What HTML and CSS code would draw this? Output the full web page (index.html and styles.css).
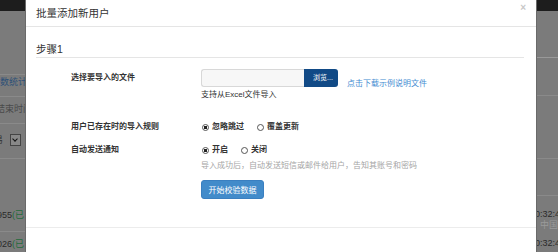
FILE: index.html
```html
<!DOCTYPE html>
<html>
<head>
  <meta charset="UTF-8">
  <title>批量添加新用户</title>
  <link rel="stylesheet" href="styles.css">
</head>
<body>

  <div class="backdrop left">
    <div class="topbar"></div>
    <div class="bg-line l1"></div>
    <div class="bg-text blue right-al">数统计</div>
    <div class="bg-line l2"></div>
    <div class="bg-text grey shift">结束时间</div>
    <div class="bg-line l3"></div>
    <div class="bg-select"><span class="cut">易</span><span class="sel-box"></span></div>
    <div class="bg-line l4"></div>
    <div class="bg-text dark num1">955<span class="green">(已</span></div>
    <div class="bg-line l5"></div>
    <div class="bg-text dark num2">026<span class="green">(已</span></div>
  </div>

  <div class="modal">
    <div class="modal-header">
      <span class="modal-title">批量添加新用户</span>
      <span class="close">×</span>
    </div>

    <div class="modal-body">
      <div class="legend">步骤1</div>

      <div class="form-row first">
        <div class="label">选择要导入的文件</div>
        <div class="controls">
          <div class="file-line">
            <div class="input-group">
              <span class="file-input"></span>
              <span class="browse">浏览...</span>
            </div>
            <a class="link">点击下载示例说明文件</a>
          </div>
          <div class="help">支持从Excel文件导入</div>
        </div>
      </div>

      <div class="form-row second">
        <div class="label">用户已存在时的导入规则</div>
        <div class="controls">
          <div class="radios">
            <span class="radio checked">忽略跳过</span>
            <span class="radio">覆盖更新</span>
          </div>
        </div>
      </div>

      <div class="form-row third">
        <div class="label">自动发送通知</div>
        <div class="controls">
          <div class="radios">
            <span class="radio checked">开启</span>
            <span class="radio">关闭</span>
          </div>
          <div class="help muted">导入成功后，自动发送短信或邮件给用户，告知其账号和密码</div>
          <button class="btn-primary">开始校验数据</button>
        </div>
      </div>
    </div>

    <div class="modal-footer"></div>
  </div>

  <div class="backdrop right">
    <div class="topbar"></div>
    <div class="bg-line r1"></div>
    <div class="bg-line r2"></div>
    <div class="bg-line r3"></div>
    <div class="bg-line r4"></div>
    <div class="bg-text dark time1">0:32:45</div>
    <div class="bg-text light">中国</div>
    <div class="bg-text dark time2">0:32:45</div>
  </div>

</body>
</html>
```

FILE: styles.css
```css
body {
  margin: 0;
  height: 252px;
  overflow: hidden;
  display: flex;
  background-color: #7b7b7b;
  font-family: "Liberation Sans", "Noto Sans CJK SC", sans-serif;
  color: #333;
}

/* dimmed page behind the dialog */
.backdrop {
  overflow: hidden;
  background-color: #7b7b7b;
  white-space: nowrap;
  font-size: 9px;
}

.backdrop.left {
  width: 25px;
  border-right: 1px solid #6a6a6a;
}

.backdrop.right {
  width: 21px;
  border-left: 1px solid #6a6a6a;
}

.topbar {
  height: 11px;
  background-color: #1d1d1d;
}

.bg-line {
  height: 1px;
  background-color: #8a8a8a;
}

.bg-text {
  line-height: 12px;
}

.blue { color: #2d5078; }
.grey { color: #4a4a4a; }
.dark { color: #2a2a2a; }
.light { color: #9a9a9a; }
.green { color: #1f6b3c; }

.right-al {
  text-align: right;
  padding-right: 4px;
}

.shift {
  margin-left: -4px;
}

.l1 { margin-top: 63px; margin-bottom: 1px; }
.l2 { margin-top: 8px; margin-bottom: 6px; }
.l3 { margin-top: 8px; margin-bottom: 9px; }

.bg-select {
  display: flex;
  align-items: center;
  gap: 7px;
  height: 13px;
  color: #333;
  margin-left: -6px;
}

.sel-box {
  width: 9px;
  height: 10px;
  border: 1px solid #444;
  background-color: #888;
  position: relative;
}

.sel-box::after {
  content: "";
  position: absolute;
  left: 2px;
  top: 2px;
  width: 3px;
  height: 3px;
  border-right: 1.5px solid #111;
  border-bottom: 1.5px solid #111;
  transform: rotate(45deg);
}

.l4 { margin-top: 12px; margin-bottom: 0; }

.num1 { margin-top: 50px; margin-left: -3px; }
.l5 { margin-top: 10px; margin-bottom: 6px; }
.num2 { margin-left: -3px; }

.r1 { margin-top: 46px; background-color: #999; }
.r2 { margin-top: 37px; }
.r3 { margin-top: 62px; }
.r4 { margin-top: 36px; }

.time1 { margin-top: 12px; margin-left: -2px; }
.light { margin-left: 3px; line-height: 11px; }
.time2 { margin-top: 6px; margin-left: -2px; }

/* dialog */
.modal {
  width: 510px;
  background-color: #fff;
  flex-shrink: 0;
}

.modal-header {
  height: 26px;
  border-bottom: 1px solid #e5e5e5;
  display: flex;
  justify-content: space-between;
  align-items: flex-start;
  padding: 0 10px 0 10px;
}

.modal-title {
  font-size: 10.5px;
  line-height: 26px;
  color: #333;
}

.close {
  font-size: 10px;
  line-height: 16px;
  color: #c8c8c8;
  font-weight: bold;
}

.modal-body {
  padding: 14px 12px 0 10px;
}

.legend {
  font-size: 10.5px;
  line-height: 16px;
  border-bottom: 1px solid #e5e5e5;
  color: #333;
}

.form-row {
  display: flex;
}

.form-row.first { margin-top: 11px; }
.form-row.second { margin-top: 19px; }
.form-row.third { margin-top: 9px; }

.label {
  width: 165px;
  padding-left: 35px;
  box-sizing: border-box;
  flex-shrink: 0;
  font-size: 8px;
  font-weight: bold;
  line-height: 14px;
  color: #333;
}

.form-row.first .label {
  line-height: 18px;
}

.controls {
  display: flex;
  flex-direction: column;
  align-items: flex-start;
}

.file-line {
  display: flex;
  align-items: flex-end;
}

.input-group {
  display: flex;
  height: 18px;
}

.file-input {
  width: 102px;
  border: 1px solid #d8d8d8;
  border-right: none;
  border-radius: 3px 0 0 3px;
  background-color: #f7f7f7;
}

.browse {
  width: 34px;
  background-color: #114a86;
  color: #fff;
  font-size: 7px;
  line-height: 18px;
  padding-left: 9px;
  box-sizing: border-box;
  border-radius: 0 3px 3px 0;
}

.link {
  font-size: 8px;
  color: #3f8bd1;
  margin-left: 9px;
  line-height: 10px;
  margin-bottom: -2px;
}

.help {
  font-size: 8px;
  line-height: 12px;
  margin-top: 2px;
  color: #333;
}

.help.muted {
  color: #a5a5a5;
  margin-top: 3px;
}

.radios {
  display: flex;
  gap: 13px;
  padding-left: 1px;
}

.radio {
  font-size: 8px;
  font-weight: bold;
  line-height: 14px;
  display: flex;
  align-items: center;
  gap: 3px;
}

.radio::before {
  content: "";
  width: 5px;
  height: 5px;
  border: 1px solid #555;
  border-radius: 50%;
  box-sizing: content-box;
}

.radio.checked::before {
  background: radial-gradient(circle, #222 0 1.6px, #fff 2px);
}

.btn-primary {
  margin-top: 8px;
  width: 63px;
  height: 19px;
  padding: 0;
  border: 1px solid #3a7fc0;
  border-radius: 3px;
  background-color: #428bca;
  color: #fff;
  font-family: inherit;
  font-size: 8px;
}

.modal-footer {
  margin-top: 28px;
  border-top: 1px solid #ececec;
}
```
